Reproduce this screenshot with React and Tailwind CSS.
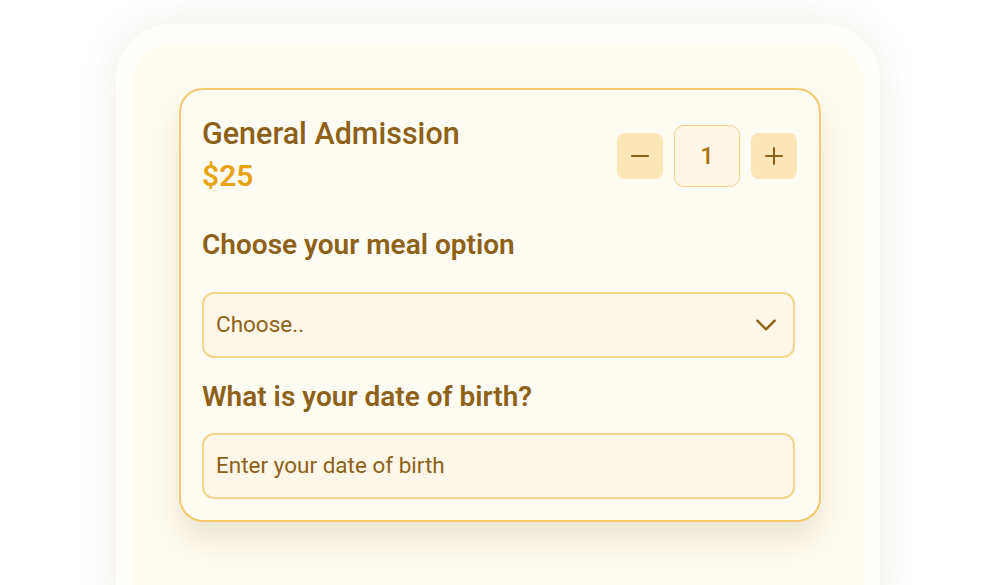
import React from "react";

export default function App() {
  return (
    <div className="w-[996px] h-[585px] bg-white overflow-hidden relative" style={{ fontFamily: "Roboto, 'Noto Sans', sans-serif" }}>
      <div className="absolute left-[116px] top-[24px] w-[764px] h-[620px] rounded-[56px] bg-[#fffefb] shadow-[0_0_40px_rgba(120,100,60,0.10)] overflow-hidden">
        <div className="mx-[16px] mt-[19px] h-full rounded-t-[40px] bg-[#fffcf2] pt-[45px] px-[47px]">
          <div className="w-[642px] rounded-[24px] border-2 border-[#f5ca6c] bg-[#fffcf3] pl-[21px] pr-[24px] pt-[26px] pb-[21px] shadow-[0_18px_30px_rgba(150,120,60,0.18)]">
            <div className="flex items-center justify-between">
              <div className="flex flex-col">
                <div className="text-[30.5px] leading-[36px] font-medium text-[#8d6118]">General Admission</div>
                <div className="mt-[6px] text-[30px] leading-[36px] font-semibold text-[#e9a310]">$25</div>
              </div>
              <div className="flex items-center gap-[11px] mr-[-2px] mt-[2px]">
                <button className="w-[46px] h-[46px] rounded-[8px] bg-[#fde7b9] flex items-center justify-center">
                  <svg width="20" height="20" viewBox="0 0 20 20"><path d="M2 10h16" stroke="#8d6118" strokeWidth="2" strokeLinecap="round" /></svg>
                </button>
                <div className="w-[66px] h-[62px] rounded-[10px] border border-[#f3cd84] bg-[#fff7e6] flex items-center justify-center text-[24px] font-medium text-[#a87410]">1</div>
                <button className="w-[46px] h-[46px] rounded-[8px] bg-[#fde7b9] flex items-center justify-center">
                  <svg width="20" height="20" viewBox="0 0 20 20"><path d="M2 10h16M10 2v16" stroke="#8d6118" strokeWidth="2" strokeLinecap="round" /></svg>
                </button>
              </div>
            </div>
            <div className="mt-[34px] text-[28px] leading-[34px] font-semibold text-[#8d6118]">Choose your meal option</div>
            <div className="mt-[30px] h-[66px] rounded-[12px] border-2 border-[#f5d48c] bg-[#fff7e8] flex items-center justify-between pl-[12px] pr-[14px]">
              <span className="text-[22.5px] text-[#8d6118]">Choose..</span>
              <svg width="26" height="26" viewBox="0 0 24 24"><path d="M4 8l8 8 8-8" fill="none" stroke="#8d6118" strokeWidth="2.2" strokeLinecap="round" strokeLinejoin="round" /></svg>
            </div>
            <div className="mt-[22px] text-[28px] leading-[34px] font-semibold text-[#8d6118]">What is your date of birth?</div>
            <div className="mt-[19px] h-[66px] rounded-[12px] border-2 border-[#f5d48c] bg-[#fff7e8] flex items-center pl-[12px]">
              <span className="text-[22.5px] text-[#8d6118]">Enter your date of birth</span>
            </div>
          </div>
        </div>
      </div>
    </div>
  );
}
